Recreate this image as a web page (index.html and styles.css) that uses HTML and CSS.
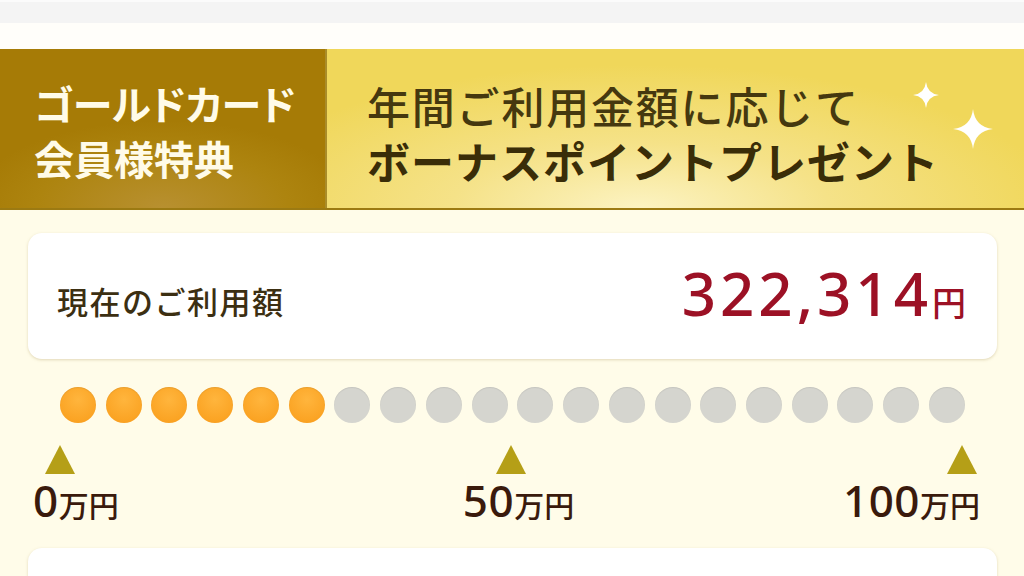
FILE: index.html
```html
<!DOCTYPE html>
<html lang="ja">
<head>
<meta charset="utf-8">
<link rel="stylesheet" href="styles.css">
</head>
<body>
<div class="topbar"></div>
<div class="gap"></div>
<header class="banner">
  <div class="banner-left">
    <div class="bl-line kana">ゴールドカード</div>
    <div class="bl-line">会員様特典</div>
  </div>
  <div class="banner-right">
    <div class="br-line1">年間ご利用金額に応じて</div>
    <div class="br-line2">ボーナスポイントプレゼント</div>
    <svg class="spark spark-s" viewBox="0 0 20 20"><path d="M10 0 Q11 9 20 10 Q11 11 10 20 Q9 11 0 10 Q9 9 10 0Z" fill="#fff"/></svg>
    <svg class="spark spark-l" viewBox="0 0 20 20"><path d="M10 0 Q11 9 20 10 Q11 11 10 20 Q9 11 0 10 Q9 9 10 0Z" fill="#fff"/></svg>
  </div>
</header>
<main class="content">
  <section class="card usage">
    <div class="usage-label">現在のご利用額</div>
    <div class="usage-amount"><span class="num">322,314</span><span class="yen">円</span></div>
  </section>
  <div class="dots">
    <span class="dot on"></span><span class="dot on"></span><span class="dot on"></span><span class="dot on"></span><span class="dot on"></span><span class="dot on"></span>
    <span class="dot"></span><span class="dot"></span><span class="dot"></span><span class="dot"></span><span class="dot"></span><span class="dot"></span><span class="dot"></span>
    <span class="dot"></span><span class="dot"></span><span class="dot"></span><span class="dot"></span><span class="dot"></span><span class="dot"></span><span class="dot"></span>
  </div>
  <div class="ticks">
    <span class="tri"></span><span class="tri"></span><span class="tri"></span>
  </div>
  <div class="scale">
    <div class="s s0"><span class="sn">0</span><span class="su">万円</span></div>
    <div class="s s50"><span class="sn">50</span><span class="su">万円</span></div>
    <div class="s s100"><span class="sn">100</span><span class="su">万円</span></div>
  </div>
  <section class="card next"></section>
</main>
</body>
</html>
```
FILE: styles.css
```css
* { box-sizing: border-box; }
html, body { margin: 0; padding: 0; }
body {
  width: 1024px;
  height: 576px;
  overflow: hidden;
  background: #fffce9;
  font-family: "Noto Sans CJK JP", "Noto Sans", sans-serif;
}
.topbar { height: 23px; background: #f4f4f4; border-top: 2px solid #fbfbfb; }
.gap { height: 26px; background: #fffefa; }
.banner {
  height: 161px;
  display: flex;
  border-bottom: 2px solid #9c7a12;
}
.banner-left {
  width: 327px;
  background: radial-gradient(ellipse 60% 55% at 50% 100%, #b89030 0%, #ad840f 65%, #a67b06 100%);
  border-right: 2px solid #a98c2a;
  padding: 27px 0 0 34px;
  color: #fffbe8;
  font-weight: 700;
  font-size: 40px;
  line-height: 55px;
}
.kana { font-feature-settings: "palt"; letter-spacing: -0.3px; }
.banner-right {
  flex: 1;
  position: relative;
  background: radial-gradient(ellipse 60% 90% at 45% 100%, #fcf3c2 0%, #f5e288 45%, #f0d75a 100%);
  padding: 30px 0 0 40px;
  color: #45380f;
}
.br-line1 { font-size: 43px; line-height: 52px; font-weight: 500; letter-spacing: 1.8px; }
.br-line2 { font-size: 43px; line-height: 58px; font-weight: 700; color: #3a2d08; letter-spacing: 1px; }
.spark { position: absolute; }
.spark-s { width: 26px; height: 26px; left: 586px; top: 33px; }
.spark-l { width: 40px; height: 42px; left: 626px; top: 59px; }

.content { padding: 23px 27px 0 28px; }
.card {
  background: #fff;
  border-radius: 14px;
  box-shadow: 0 1px 3px rgba(170, 150, 90, 0.35);
}
.usage {
  height: 126px;
  display: flex;
  align-items: center;
  justify-content: space-between;
  padding: 0 31px 0 29px;
}
.usage-label { font-size: 31px; color: #3c2f12; font-weight: 500; padding-top: 8px; letter-spacing: 1.5px; }
.usage-amount { color: #9c1125; display: flex; align-items: baseline; margin-top: -6px; }
.num { font-family: "Noto Sans", sans-serif; font-size: 60px; font-weight: 500; letter-spacing: 4px; }
.yen { font-size: 34px; font-weight: 500; }

.dots {
  margin: 28px 0 0 32px;
  width: 905px;
  display: flex;
  justify-content: space-between;
}
.dot {
  width: 36px; height: 36px; border-radius: 50%;
  background: #d5d5cf;
  box-shadow: inset 0 1px 1px rgba(0,0,0,0.08);
}
.dot.on { background: radial-gradient(circle at 50% 35%, #ffb53d 0%, #fba424 70%, #f5951a 100%); }

.ticks {
  margin: 22px 0 0 17px;
  width: 932px;
  display: flex;
  justify-content: space-between;
}
.tri {
  width: 0; height: 0;
  border-left: 15px solid transparent;
  border-right: 15px solid transparent;
  border-bottom: 29px solid #b59f17;
}
.scale {
  margin: 4px 0 0 5px;
  width: 947px;
  display: grid;
  grid-template-columns: 1fr auto 1fr;
  color: #3a1a0c;
}
.s { display: flex; align-items: baseline; line-height: 44px; }
.s0 { justify-self: start; }
.s50 { justify-self: center; padding-left: 24px; }
.s100 { justify-self: end; }
.sn { font-family: "Noto Sans", sans-serif; font-size: 44px; font-weight: 500; letter-spacing: 0.5px; }
.su { font-size: 30px; font-weight: 500; }
.next { margin-top: 22px; height: 60px; }
```
